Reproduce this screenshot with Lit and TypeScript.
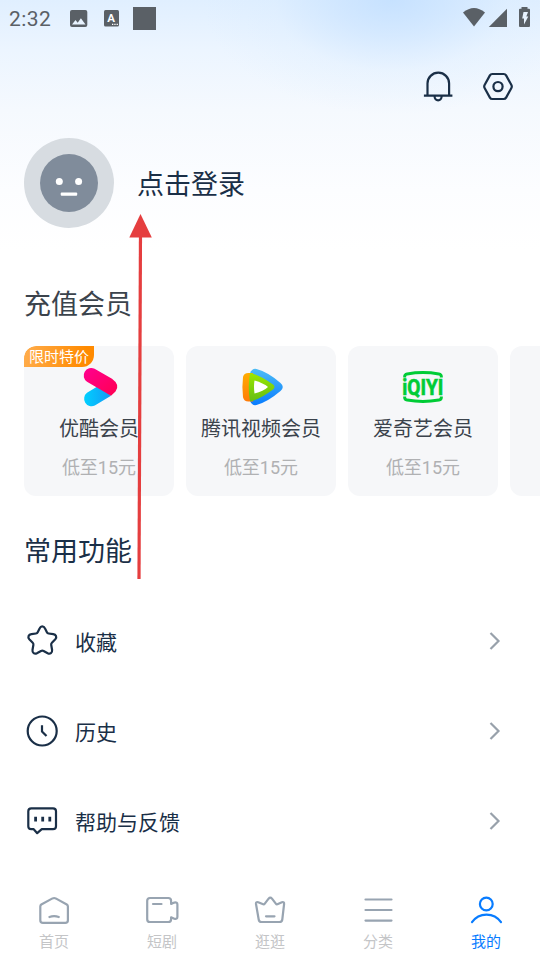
import { LitElement, html, css, svg } from "lit";
import { customElement, property } from "lit/decorators.js";

const icons: Record<string, unknown> = {
  bell: svg`<path d="M7.500 26V14.500a10.800 10.800 0 0 1 21.600 0V26M3.900 26.600h28.500M14.600 27.500a3.500 3.800 0 0 0 7 0" stroke-linecap="butt"/>`,
  gear: svg`<path d="M12.300 5h11.400q1.600 0 2.400 1.400l5.300 9.600q.8 1.500 0 3l-5.300 9.600q-.8 1.400-2.400 1.400H12.300q-1.600 0-2.400-1.400L4.600 19q-.8-1.500 0-3l5.300-9.600Q10.700 5 12.300 5z"/><circle cx="18" cy="17.600" r="4.600"/>`,
  star: svg`<path d="M18.200 3.300c1.300 0 2.200.8 2.700 1.900l2 4q.5 1.100 1.700 1.300l4.600.7c2.800.4 4 2.900 2.100 5l-3.400 3.500q-.9.900-.7 2.100l.9 5.200c.4 2.800-2 4.400-4.400 3.200l-4.100-2.200q-1.300-.6-2.600 0l-4.100 2.200c-2.400 1.200-4.800-.4-4.400-3.200l.9-5.200q.2-1.200-.7-2.100l-3.400-3.500c-1.900-2.100-.7-4.600 2.100-5l4.600-.7q1.200-.2 1.700-1.300l2-4c.5-1.100 1.200-1.900 2.500-1.900z"/>`,
  clock: svg`<circle cx="18.200" cy="18" r="14.500"/><path d="M18 12.200v6.300l4.500 4.500" stroke-linecap="butt"/>`,
  chat: svg`<path d="M7.300 5.300h21.700q3 0 3 3v14.900q0 3-3 3h-11.200L13.200 30.200 9.700 26.200H7.300q-3 0-3-3V8.300q0-3 3-3z"/><path d="M11.600 13.800v4.800M18.700 13.800v4.800M25.800 13.800v4.800" stroke-linecap="butt" stroke-width="2.800"/>`,
  home: svg`<path d="M5.300 11.500q-1 .7-1 2v13.700q0 2.700 2.700 2.700h22.200q2.700 0 2.700-2.700V13.500q0-1.300-1.100-2L19.700 5.400q-1.600-.8-3.200 0z"/><path d="M13.400 24q4.700-1.700 9.400 0"/>`,
  video: svg`<path d="M6 5h18.300q2.800 0 2.800 2.800v3.200l3.200-1.400q3.100-.7 3.100 1.900v12.300q0 2.600-3.100 1.900l-3.200-1.400v1.900q0 2.800-2.800 2.800H6q-2.800 0-2.800-2.800V7.800Q3.200 5 6 5z"/><path d="M9 11h8.500"/>`,
  crown: svg`<path d="M6.200 9.200l5 2.100q.9.300 1.400-.4l4-5.200q1.700-2 3.400 0l4 5.200q.5.700 1.400.4l4.500-2.100q2.500-.6 2.200 1.800L30.300 26.500q-.3 2.500-2.800 2.500h-18Q7 29 6.700 26.500L4 11q-.3-2.400 2.200-1.800z"/><path d="M14 23.300h8.500"/>`,
  list: svg`<path d="M5.500 6.500h26M5.500 17h26M5.500 27.600h26"/>`,
  user: svg`<circle cx="18.300" cy="11" r="6.400"/><path d="M4 29.200C11 19 26 19 33 29.200"/>`,
};

@customElement("line-icon")
export class LineIcon extends LitElement {
  static styles = css`
    :host { display: block; width: 36px; height: 36px; flex: none; }
    svg { display: block; fill: none; stroke: currentColor; stroke-width: 2.200; stroke-linecap: round; stroke-linejoin: round; }
  `;
  @property() name = "";
  render() {
    return html`<svg width="36" height="36" viewBox="0 0 36 36">${icons[this.name]}</svg>`;
  }
}

const youku = html`<svg width="48" height="44" viewBox="0 0 48 44">
  <defs>
    <linearGradient id="yb"><stop stop-color="#00d0ff"/><stop offset="1" stop-color="#1499f5"/></linearGradient>
    <linearGradient id="yp" x2="1" y2="1"><stop stop-color="#ff0090"/><stop offset="1" stop-color="#ff0050"/></linearGradient>
  </defs>
  <path d="M12 27.800L24 20.600l12 10.200-16.200 9.700A7.500 7.500 0 0 1 12 27.800z" fill="url(#yb)"/>
  <path d="M19.600 3.800l17.400 10Q45.500 20 40.500 26.500L36 30.800 12 16.700A7.500 7.500 0 0 1 19.600 3.800z" fill="url(#yp)"/>
</svg>`;

const tencent = html`<svg width="48" height="44" viewBox="0 0 48 44">
  <defs>
    <linearGradient id="tb" x2="0" y2="1"><stop stop-color="#4dbcf5"/><stop offset="1" stop-color="#087cff"/></linearGradient>
    <linearGradient id="to" x2="0" y2="1"><stop stop-color="#ffac00"/><stop offset="1" stop-color="#ff7b08"/></linearGradient>
    <linearGradient id="tg" x2="0" y2="1"><stop stop-color="#9be800"/><stop offset="1" stop-color="#65bd13"/></linearGradient>
  </defs>
  <path d="M13 8.500q2-5.500 6.500-4.500Q31 7 43.500 18q4.500 4 0 8-13 11-24 14Q15 41 13 36z" fill="url(#tb)"/>
  <path d="M6 12q1-4.300 6-4h4v28.500h-4q-5 .3-6-4.200-1.200-10.300 0-20.300z" fill="url(#to)"/>
  <path d="M13 8q9 1.500 23 11.500 3 2.500 0 5Q22 35 13 36.300q-2.500-14 0-28.300z" fill="url(#tg)"/>
  <path d="M17.500 15.500q9 2.500 13.500 6.500-4.500 4-13.500 6.500-1-6.500 0-13z" fill="#fff"/>
</svg>`;

const iqiyi = html`<svg width="48" height="44" viewBox="0 0 48 44">
  <g fill="none" stroke="#00cc36" stroke-width="3">
    <path d="M5.700 12.500V11.300Q5.700 9.500 8.200 8.900q15.800-2.600 31.600 0 2.500.6 2.500 2.400v1.200M5.700 31.500v1.200q0 1.800 2.500 2.400 15.800 2.600 31.600 0 2.500-.6 2.500-2.400v-1.200"/>
  </g>
  <g transform="translate(3.300 29.800) scale(.87 1)">
    <text x="0" y="0" fill="#00cc36" stroke="#00cc36" stroke-width=".6" font-family="Roboto, sans-serif" font-weight="700" font-size="22">iQIYI</text>
  </g>
</svg>`;

@customElement("vip-card")
export class VipCard extends LitElement {
  static styles = css`
    :host { position: relative; display: flex; flex-direction: column; align-items: center; flex: none; box-sizing: border-box; width: 150px; height: 150px; padding-top: 19px; border-radius: 12px; background: #f6f7f9; overflow: hidden; }
    .logo { height: 44px; }
    .title { margin-top: 6px; font-size: 20px; line-height: 28px; color: #3b434c; white-space: nowrap; }
    .price { margin-top: 12px; font-size: 18px; line-height: 26px; color: #b0b1b3; }
    .badge { position: absolute; left: 0; top: 0; width: 70px; height: 21px; border-radius: 12px 0 12px 0; background: linear-gradient(100deg, #ffad4d, #ff8a00 85%); color: #fff; font-size: 15px; line-height: 23px; text-align: center; }
  `;
  @property() title = "";
  @property() badge = "";
  @property({ attribute: false }) logo: unknown;
  render() {
    return html`
      ${this.badge ? html`<div class="badge">${this.badge}</div>` : ""}
      <div class="logo">${this.logo}</div>
      ${this.title ? html`<div class="title">${this.title}</div><div class="price">低至15元</div>` : ""}
    `;
  }
}

@customElement("app-root")
export class AppRoot extends LitElement {
  static styles = css`
    :host { position: relative; display: flex; flex-direction: column; width: 540px; height: 960px; overflow: hidden; font-family: Roboto, "Noto Sans CJK SC", sans-serif; font-weight: 400; color: #1a2f47;
      background: radial-gradient(ellipse 190px 115px at 392px 0, rgba(190, 221, 255, .75), rgba(194, 223, 255, .5) 30%, rgba(210, 232, 255, .2) 62%, rgba(225, 240, 255, 0)), linear-gradient(#e0efff 0, #ecf5ff 50px, #f5f9fe 110px, #fcfdff 190px, #fff 250px); }
    .status { display: flex; height: 36px; flex: none; }
    .time { width: 60px; padding-left: 9px; font-size: 21px; line-height: 38px; color: #5a6066; letter-spacing: .4px; }
    .status svg { display: block; }
    .tools { display: flex; justify-content: flex-end; gap: 24px; height: 36px; padding: 33px 24px 0 0; flex: none; }
    .profile { display: flex; align-items: center; gap: 23px; height: 90px; padding-left: 24px; margin-top: 33px; flex: none; }
    .profile svg { display: block; }
    .login { font-size: 27px; line-height: 40px; padding-top: 4px; }
    h2 { margin: 0; padding-left: 24px; font-size: 27px; line-height: 40px; font-weight: 400; flex: none; }
    .vip { margin-top: 57px; color: #3b434c; }
    .cards { display: flex; gap: 12px; padding-left: 24px; margin-top: 21px; flex: none; }
    .common { margin-top: 36px; }
    .rows { margin-top: 24px; flex: none; }
    .row { display: flex; align-items: center; height: 90px; padding: 0 38px 0 24px; }
    .label { flex: 1; margin-left: 15px; font-size: 21px; line-height: 32px; padding-top: 3px; }
    .tabs { display: grid; grid-template-columns: repeat(5, 1fr); margin-top: 27px; flex: none; }
    .tab { display: flex; flex-direction: column; align-items: center; color: #98a4b1; }
    .name { margin-top: 1px; font-size: 15px; line-height: 24px; color: #c4c5c7; }
    .active, .active .name { color: #087cff; }
    .arrow { position: absolute; left: 120px; top: 205px; }
  `;
  render() {
    return html`
      <div class="status">
        <div class="time">2:32</div>
        <svg width="471" height="36" viewBox="69 0 471 36" fill="#5a6066">
          <rect x="70" y="10" width="17.300" height="17" rx="2"/>
          <path d="M72 24.500l3.500-4.500 2.200 2.700 3.200-4.500 4.600 6.300z" fill="#e8f3ff"/>
          <rect x="104" y="10" width="15" height="16.500" rx="1.500"/>
          <text x="111.200" y="22" text-anchor="middle" font-size="11.500" font-weight="700" fill="#fff">A</text>
          <path d="M112 23.800h1.300v1.300H112zM114.300 23.800h1.300v1.300h-1.300zM116.600 23.800h1.300v1.300h-1.300z" fill="#fff"/>
          <rect x="133" y="7" width="23" height="23"/>
          <path d="M463 12.500q11-9 22 0L474 26.500z"/>
          <path d="M507 8.800V27h-18.200z"/>
          <path d="M521.500 7h6v1.700h1.500q1 0 1 1V26q0 1-1 1h-9q-1 0-1-1V9.700q0-1 1-1h1.500z"/>
          <path d="M523.500 12h4.500l-1.700 4.500h2L524 24.500v-6h-1.800z" fill="#e8f3ff"/>
        </svg>
      </div>
      <div class="tools"><line-icon name="bell"></line-icon><line-icon name="gear"></line-icon></div>
      <div class="profile">
        <svg width="90" height="90" viewBox="0 0 90 90">
          <circle cx="45" cy="45" r="45" fill="#d7dce1"/><circle cx="45" cy="45" r="29" fill="#808c9b"/>
          <circle cx="35.300" cy="43.500" r="3.500" fill="#fff"/><circle cx="54.600" cy="43.500" r="3.500" fill="#fff"/>
          <rect x="36.700" y="54.500" width="16.500" height="3.300" rx="1" fill="#fff"/>
        </svg>
        <div class="login">点击登录</div>
      </div>
      <h2 class="vip">充值会员</h2>
      <div class="cards">
        <vip-card title="优酷会员" badge="限时特价" .logo=${youku}></vip-card>
        <vip-card title="腾讯视频会员" .logo=${tencent}></vip-card>
        <vip-card title="爱奇艺会员" .logo=${iqiyi}></vip-card>
        <vip-card></vip-card>
      </div>
      <h2 class="common">常用功能</h2>
      <div class="rows">
        ${[["star", "收藏"], ["clock", "历史"], ["chat", "帮助与反馈"]].map(([icon, label]) => html`
          <div class="row">
            <line-icon name=${icon}></line-icon>
            <div class="label">${label}</div>
            <svg width="14" height="20" viewBox="0 0 14 20" fill="none" stroke="#98a1ab" stroke-width="2.200"><path d="M2.500 2l8 8-8 8"/></svg>
          </div>`)}
      </div>
      <div class="tabs">
        ${[["home", "首页"], ["video", "短剧"], ["crown", "逛逛"], ["list", "分类"], ["user", "我的"]].map(([icon, label]) => html`
          <div class="tab ${icon === "user" ? "active" : ""}"><line-icon name=${icon}></line-icon><div class="name">${label}</div></div>`)}
      </div>
      <svg class="arrow" width="40" height="380" viewBox="120 205 40 380">
        <path d="M140.500 230L139 579" stroke="#e53e3f" stroke-width="3.200"/>
        <path d="M140.500 214l11.300 23.500h-22.500z" fill="#e53e3f"/>
      </svg>
    `;
  }
}
